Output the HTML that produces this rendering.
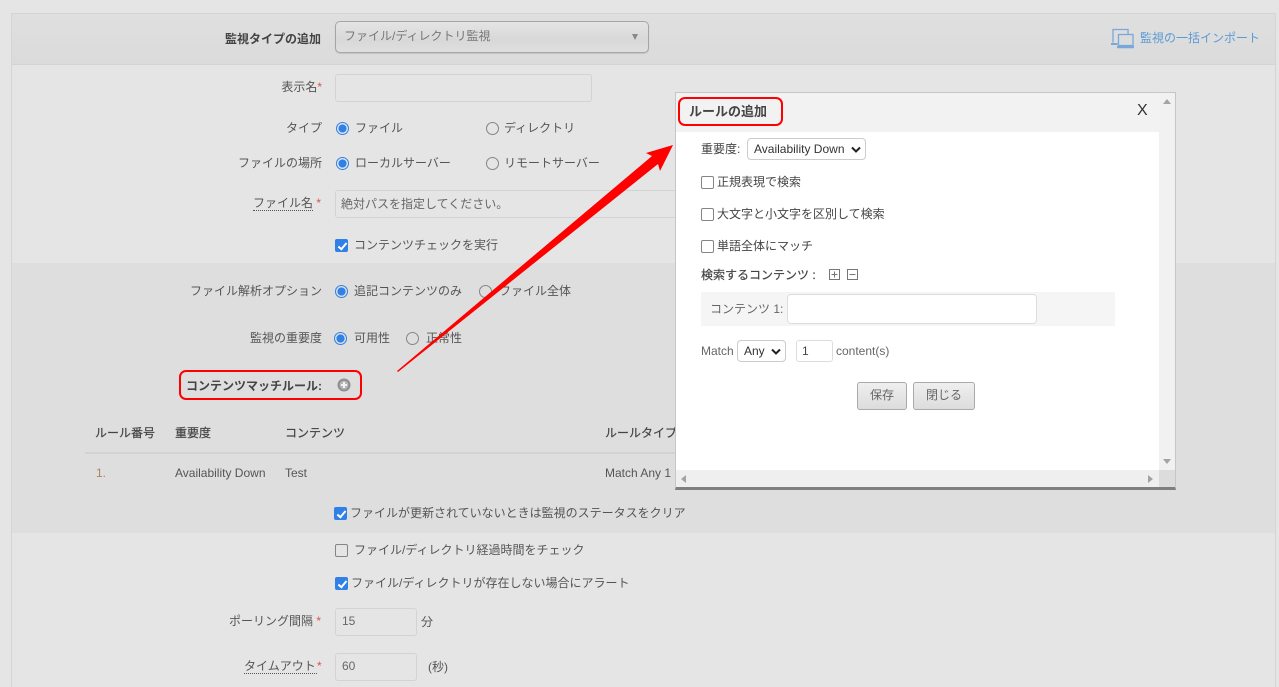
<!DOCTYPE html>
<html lang="ja"><head><meta charset="utf-8"><title>ルールの追加</title>
<style>
html,body{margin:0;padding:0}
body{width:1279px;height:687px;position:relative;overflow:hidden;background:#e5e5e5;font-family:"Liberation Sans","Noto Sans CJK JP",sans-serif;font-size:12px;color:#555}
.a{position:absolute;box-sizing:border-box}
.t{position:absolute;white-space:nowrap;line-height:16px;height:16px}
.r{right:957px;text-align:right}
.req{color:#d9534f}
.dot{border-bottom:1px dotted #555;height:15px}
b{font-weight:bold;color:#444}
.h{-webkit-text-stroke:.2px #444;color:#444}
.f{position:absolute;box-sizing:border-box;background:#e5e5e5;border:1px solid #d3d3d3;border-radius:3px}
input[type=radio],input[type=checkbox]{position:absolute;margin:0;width:13px;height:13px;-webkit-appearance:none;appearance:none;box-sizing:border-box;border:1px solid #858585;background:transparent}
input[type=radio]{border-radius:50%}
input[type=radio]:checked{border-color:#2f80e7;background:radial-gradient(circle,#2f80e7 0,#2f80e7 3.800px,transparent 4.300px)}
input[type=checkbox]{border-radius:2px}
input[type=checkbox]:checked{background:#2f80e7;border-color:#2f80e7}
input[type=checkbox]:checked::after{content:"";position:absolute;left:3.500px;top:.5px;width:3px;height:7px;border:solid #fff;border-width:0 2px 2px 0;transform:rotate(40deg)}
.mc{background:#fff!important}
.m{color:#444}
select{position:absolute;box-sizing:border-box;margin:0;padding:0 0 0 6px;background:#fff;border:1px solid #ccc;border-radius:4px;font:12px "Liberation Sans",sans-serif;color:#333;-webkit-appearance:none;appearance:none}
.btn{position:absolute;box-sizing:border-box;height:28px;top:382px;border:1px solid #aaa;border-radius:3px;background:linear-gradient(#efefef,#dcdcdc);text-align:center;line-height:25px;color:#666;font-size:12px}
</style></head><body>

<div class="a" style="left:11px;top:13px;width:1265px;height:52px;background:linear-gradient(#dfdfdf,#dbdbdb);border:1px solid #d4d4d4"></div>
<div class="a" style="left:11px;top:64px;width:1px;height:623px;background:#d4d4d4"></div>
<div class="a" style="left:1275px;top:64px;width:1px;height:623px;background:#d4d4d4"></div>
<div class="a" style="left:12px;top:263px;width:1263px;height:270px;background:#dedede"></div>

<div class="t" style="left:225px;top:31px"><b>監視タイプの追加</b></div>
<div class="a" style="left:335px;top:21px;width:314px;height:32px;border:1px solid #a5a5a5;border-radius:5px;background:linear-gradient(#e4e4e4,#d8d8d8 60%,#dfdfdf);box-shadow:0 1px 1px #c4c4c4"></div>
<div class="t" style="left:344px;top:28px;color:#777">ファイル/ディレクトリ監視</div>
<div class="a" style="left:632px;top:34px;width:0;height:0;border-left:3.500px solid transparent;border-right:3.500px solid transparent;border-top:6px solid #888"></div>

<svg class="a" style="left:1111px;top:28px" width="24" height="21" viewBox="0 0 24 21" fill="none">
<path d="M2 14.500V1.500h15V6" stroke="#7aa7d9" stroke-width="1.300"/>
<path d="M0 15h6.500v2H0z" fill="#7aa7d9"/>
<rect x="7.500" y="6.500" width="14.500" height="11" stroke="#7aa7d9" stroke-width="1.300" fill="#dcdcdc"/>
<path d="M6 18h17v2.200H6z" fill="#7aa7d9"/>
</svg>
<div class="t" style="left:1140px;top:30px;color:#5b9bd5">監視の一括インポート</div>

<div class="t r" style="top:79px">表示名<span class="req">*</span></div>
<div class="f" style="left:335px;top:74px;width:257px;height:28px"></div>

<div class="t r" style="top:120px">タイプ</div>
<input type="radio" checked style="left:336px;top:122px"><div class="t" style="left:355px;top:120px">ファイル</div>
<input type="radio" style="left:486px;top:122px"><div class="t" style="left:504px;top:120px">ディレクトリ</div>

<div class="t r" style="top:155px">ファイルの場所</div>
<input type="radio" checked style="left:336px;top:157px"><div class="t" style="left:355px;top:155px">ローカルサーバー</div>
<input type="radio" style="left:486px;top:157px"><div class="t" style="left:504px;top:155px">リモートサーバー</div>

<div class="t" style="left:253px;top:195px"><span class="dot" style="display:inline-block">ファイル名</span> <span class="req">*</span></div>
<div class="f" style="left:335px;top:190px;width:360px;height:28px"></div>
<div class="t" style="left:341px;top:196px;color:#666">絶対パスを指定してください。</div>

<input type="checkbox" checked style="left:335px;top:239px"><div class="t" style="left:354px;top:237px">コンテンツチェックを実行</div>

<div class="t r" style="top:283px">ファイル解析オプション</div>
<input type="radio" checked style="left:335px;top:285px"><div class="t" style="left:354px;top:283px">追記コンテンツのみ</div>
<input type="radio" style="left:479px;top:285px"><div class="t" style="left:499px;top:283px">ファイル全体</div>

<div class="t r" style="top:330px">監視の重要度</div>
<input type="radio" checked style="left:334px;top:332px"><div class="t" style="left:354px;top:330px">可用性</div>
<input type="radio" style="left:406px;top:332px"><div class="t" style="left:426px;top:330px">正常性</div>

<div class="a" style="left:179px;top:370px;width:183px;height:30px;border:2px solid #f00;border-radius:7px"></div>
<div class="t" style="left:186px;top:378px"><b>コンテンツマッチルール:</b></div>
<svg class="a" style="left:337px;top:378px" width="14" height="14" viewBox="0 0 14 14">
<circle cx="7" cy="7" r="6.500" fill="#8f8f8f"/><circle cx="7" cy="7" r="4.500" fill="#b5b5b5"/>
<path d="M7 4v6M4 7h6" stroke="#f2f2f2" stroke-width="2"/>
</svg>

<div class="t h" style="left:95px;top:425px">ルール番号</div>
<div class="t h" style="left:175px;top:425px">重要度</div>
<div class="t h" style="left:285px;top:425px">コンテンツ</div>
<div class="t h" style="left:605px;top:425px">ルールタイプ</div>
<div class="a" style="left:85px;top:452px;width:600px;height:2px;background:#d2d2d2"></div>
<div class="t" style="left:96px;top:465px;color:#a5895a">1.</div>
<div class="t" style="left:175px;top:465px">Availability Down</div>
<div class="t" style="left:285px;top:465px">Test</div>
<div class="t" style="left:605px;top:465px">Match Any 1</div>

<input type="checkbox" checked style="left:334px;top:507px"><div class="t" style="left:350px;top:505px">ファイルが更新されていないときは監視のステータスをクリア</div>
<input type="checkbox" style="left:335px;top:544px"><div class="t" style="left:354px;top:542px">ファイル/ディレクトリ経過時間をチェック</div>
<input type="checkbox" checked style="left:335px;top:577px"><div class="t" style="left:351px;top:575px">ファイル/ディレクトリが存在しない場合にアラート</div>

<div class="t" style="left:229px;top:613px">ポーリング間隔 <span class="req">*</span></div>
<div class="f" style="left:335px;top:608px;width:82px;height:28px"></div>
<div class="t" style="left:342px;top:613px;color:#666">15</div>
<div class="t" style="left:421px;top:614px">分</div>

<div class="t" style="left:244px;top:658px"><span class="dot" style="display:inline-block;width:73px">タイムアウト</span><span class="req">*</span></div>
<div class="f" style="left:335px;top:653px;width:82px;height:28px"></div>
<div class="t" style="left:342px;top:658px;color:#666">60</div>
<div class="t" style="left:428px;top:659px">(秒)</div>

<!-- modal -->
<div class="a" style="left:675px;top:92px;width:501px;height:398px;background:#fff;border:1px solid #c6c6c6;border-bottom:3px solid #7f7f7f"></div>
<div class="a" style="left:676px;top:93px;width:483px;height:39px;background:#f2f2f2"></div>
<div class="a" style="left:1159px;top:93px;width:16px;height:377px;background:#f1f1f1"></div>
<div class="a" style="left:676px;top:470px;width:483px;height:17px;background:#efefef"></div>
<div class="a" style="left:1159px;top:470px;width:16px;height:17px;background:#dcdcdc"></div>
<div class="a" style="left:1163px;top:99px;width:0;height:0;border-left:4px solid transparent;border-right:4px solid transparent;border-bottom:5px solid #a3a3a3"></div>
<div class="a" style="left:1163px;top:459px;width:0;height:0;border-left:4px solid transparent;border-right:4px solid transparent;border-top:5px solid #a3a3a3"></div>
<div class="a" style="left:681px;top:475px;width:0;height:0;border-top:4px solid transparent;border-bottom:4px solid transparent;border-right:5px solid #a3a3a3"></div>
<div class="a" style="left:1148px;top:475px;width:0;height:0;border-top:4px solid transparent;border-bottom:4px solid transparent;border-left:5px solid #a3a3a3"></div>

<div class="a" style="left:678px;top:97px;width:105px;height:29px;border:2px solid #f00;border-radius:7px"></div>
<div class="t" style="left:689px;top:104px;font-size:13px"><b>ルールの追加</b></div>
<div class="t" style="left:1137px;top:103px;font-size:16px;color:#333">X</div>

<div class="t m" style="left:701px;top:141px">重要度:</div>
<select style="left:747px;top:138px;width:119px;height:22px"><option>Availability Down</option></select>
<svg class="a" style="left:851px;top:146px" width="10" height="7" viewBox="0 0 10 7" fill="none"><path d="M1 1.500l4 4 4-4" stroke="#222" stroke-width="2"/></svg>

<input class="mc" type="checkbox" style="left:701px;top:176px"><div class="t m" style="left:717px;top:174px">正規表現で検索</div>
<input class="mc" type="checkbox" style="left:701px;top:208px"><div class="t m" style="left:717px;top:206px">大文字と小文字を区別して検索</div>
<input class="mc" type="checkbox" style="left:701px;top:240px"><div class="t m" style="left:717px;top:238px">単語全体にマッチ</div>

<div class="t h" style="left:701px;top:267px">検索するコンテンツ :</div>
<svg class="a" style="left:829px;top:269px" width="30" height="12" viewBox="0 0 30 12" fill="none" stroke="#777">
<rect x=".5" y=".5" width="10" height="10"/><path d="M2.500 5.500h6M5.500 2.500v6"/>
<rect x="18.500" y=".5" width="10" height="10"/><path d="M20.500 5.500h6"/>
</svg>

<div class="a" style="left:701px;top:292px;width:414px;height:34px;background:#f5f5f5"></div>
<div class="t" style="left:710px;top:301px;color:#666">コンテンツ 1:</div>
<div class="a" style="left:787px;top:294px;width:250px;height:30px;background:#fff;border:1px solid #ddd;border-radius:4px"></div>

<div class="t" style="left:701px;top:343px;color:#666">Match</div>
<select style="left:737px;top:340px;width:49px;height:22px"><option>Any</option></select>
<svg class="a" style="left:771px;top:348px" width="10" height="7" viewBox="0 0 10 7" fill="none"><path d="M1 1.500l4 4 4-4" stroke="#222" stroke-width="2"/></svg>
<div class="a" style="left:796px;top:340px;width:37px;height:22px;background:#fff;border:1px solid #ddd;border-radius:3px"></div>
<div class="t" style="left:802px;top:343px;color:#444">1</div>
<div class="t" style="left:836px;top:343px;color:#666">content(s)</div>

<div class="btn" style="left:857px;width:50px">保存</div>
<div class="btn" style="left:913px;width:62px">閉じる</div>

<svg class="a" style="left:390px;top:140px" width="290" height="240" viewBox="390 140 290 240">
<polygon fill="#f00" points="397,371 652,156 646,153 673,145 660,171 658,164 398,372"/>
</svg>
</body></html>
